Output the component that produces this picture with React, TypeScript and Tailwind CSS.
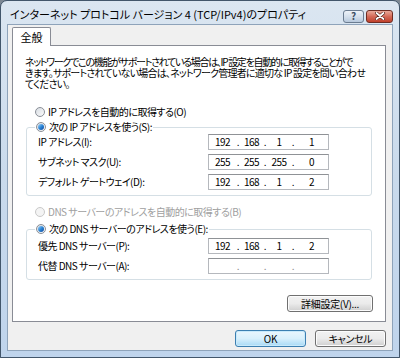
import type { ReactNode } from 'react';

const jp = "font-['Noto_Sans_CJK_JP','Noto_Sans',sans-serif] [font-feature-settings:'palt']";

function Radio({ checked, disabled }: { checked?: boolean; disabled?: boolean }) {
  return (
    <span
      className={`inline-flex items-center justify-center w-[10px] h-[10px] rounded-full border shrink-0 ${
        disabled
          ? 'border-[#c9c9c9] bg-[#f4f4f4]'
          : 'border-[#8a8f97] bg-gradient-to-br from-[#d8dde3] to-[#fbfbfb]'
      }`}
    >
      {checked && <span className="w-[6px] h-[6px] rounded-full bg-gradient-to-br from-[#9fd4f7] via-[#2b86d6] to-[#13459a]" />}
    </span>
  );
}

function IpBox({ parts }: { parts: string[] }) {
  const empty = parts.every(p => p === '');
  const dot = `text-center ${empty ? 'text-[#8a8a8a]' : ''}`;
  return (
    <div className="w-[121px] h-[16px] border border-[#b5b8bd] border-t-[#8f9296] bg-white grid grid-cols-[27px_4px_23px_4px_24px_4px_1fr] items-center text-[10px] leading-none text-black">
      <span className="text-center">{parts[0]}</span>
      <span className={dot}>.</span>
      <span className="text-center">{parts[1]}</span>
      <span className={dot}>.</span>
      <span className="text-center">{parts[2]}</span>
      <span className={dot}>.</span>
      <span className="text-center">{parts[3]}</span>
    </div>
  );
}

function Row({ label, parts }: { label: string; parts: string[] }) {
  return (
    <div className="flex items-center h-[16px]">
      <span className="w-[181px] pl-[11px] leading-none">{label}</span>
      <IpBox parts={parts} />
    </div>
  );
}

function Group({ legend, children, className }: { legend: ReactNode; children: ReactNode; className?: string }) {
  return (
    <fieldset className={`mx-[13px] border border-[#d5dfe5] rounded-[3px] ${className ?? ''}`}>
      <legend className="ml-[8px] px-[1px] h-[12px] flex items-center gap-[3px] leading-none">
        {legend}
      </legend>
      {children}
    </fieldset>
  );
}

function Btn({ children, primary, className }: { children: ReactNode; primary?: boolean; className?: string }) {
  return (
    <button
      type="button"
      className={`h-[17px] rounded-[3px] border text-[10px] leading-none text-black tracking-[-0.3px] ${
        primary
          ? 'border-[#3c7fb1] bg-gradient-to-b from-[#eaf6fd] via-[#d9f0fc] to-[#a7d9f5] shadow-[inset_0_0_0_1px_#c9eafb]'
          : 'border-[#707070] bg-gradient-to-b from-[#f2f2f2] via-[#ebebeb] to-[#cfcfcf] shadow-[inset_0_0_0_1px_#fcfcfc]'
      } ${className ?? ''}`}
    >
      {children}
    </button>
  );
}

export default function App() {
  return (
    <div className={`w-[400px] h-[358px] bg-[#7d8894] ${jp}`}>
      <div className="w-full h-full rounded-t-[7px] border border-[#42566b] bg-gradient-to-b from-[#dbe6f1] via-[#c9daec] to-[#bfd4ec] flex flex-col">
        {/* title bar */}
        <div className="h-[23px] flex items-center pl-[9px] pr-[6px] pt-[4px]">
          <span className="flex-1 text-[11px] leading-none text-black">
            インターネット プロトコル バージョン 4 (TCP/IPv4)のプロパティ
          </span>
          <div className="flex gap-[2px] mt-[3px]">
            <div className="w-[21px] h-[13px] rounded-[3px] border border-[#6b7c90] bg-gradient-to-b from-[#edf2f8] via-[#d5e0ec] to-[#b7c8dc] flex items-center justify-center text-[10px] font-bold leading-none text-[#3d4e63]">
              ?
            </div>
            <div className="w-[27px] h-[13px] rounded-[3px] border border-[#6e2c22] bg-gradient-to-b from-[#e9a99a] via-[#d46a58] to-[#c03f2a] flex items-center justify-center">
              <svg width="10" height="8" viewBox="0 0 10 8">
                <path d="M1.5 1 L8.5 7 M8.5 1 L1.5 7" stroke="#4a1a12" strokeWidth="3" strokeLinecap="round" />
                <path d="M1.5 1 L8.5 7 M8.5 1 L1.5 7" stroke="#fff" strokeWidth="1.8" strokeLinecap="round" />
              </svg>
            </div>
          </div>
        </div>

        {/* client */}
        <div className="flex-1 mx-[6px] mb-[6px] border border-[#8ea3ba] bg-[#f0f0f0] flex flex-col px-[4px] pt-[1px]">
          {/* tab strip */}
          <div className="h-[19px] flex items-end">
            <div className="relative z-10 -mb-px w-[39px] h-[19px] bg-white border border-b-0 border-[#898c95] rounded-t-[2px] flex items-center justify-center text-[11px] leading-none">
              全般
            </div>
          </div>

          {/* tab panel */}
          <div className="h-[277px] bg-white border border-[#898c95] mr-[2px] text-[10px] tracking-[-0.5px] text-black flex flex-col">
            <div className="pl-[12px] pt-[10px] leading-[11px] whitespace-nowrap flex flex-col">
              <span className="tracking-[-1.3px]">ネットワークでこの機能がサポートされている場合は、IP 設定を自動的に取得することがで</span>
              <span className="tracking-[-0.78px]">きます。サポートされていない場合は、ネットワーク管理者に適切な IP 設定を問い合わせ</span>
              <span className="tracking-[-0.78px]">てください。</span>
            </div>

            <div className="mt-[17px] ml-[22px] h-[12px] flex items-center gap-[3px] leading-none">
              <Radio />
              <span>IP アドレスを自動的に取得する(O)</span>
            </div>

            <Group
              className="mt-[3px] pb-[5px]"
              legend={
                <>
                  <Radio checked />
                  <span>次の IP アドレスを使う(S):</span>
                </>
              }
            >
              <div className="flex flex-col gap-[4px] pt-[1px]">
                <Row label="IP アドレス(I):" parts={['192', '168', '1', '1']} />
                <Row label="サブネット マスク(U):" parts={['255', '255', '255', '0']} />
                <Row label="デフォルト ゲートウェイ(D):" parts={['192', '168', '1', '2']} />
              </div>
            </Group>

            <div className="mt-[10px] ml-[22px] h-[12px] flex items-center gap-[3px] leading-none text-[#a0a0a0]">
              <Radio disabled />
              <span>DNS サーバーのアドレスを自動的に取得する(B)</span>
            </div>

            <Group
              className="mt-[5px] pb-[5px]"
              legend={
                <>
                  <Radio checked />
                  <span>次の DNS サーバーのアドレスを使う(E):</span>
                </>
              }
            >
              <div className="flex flex-col gap-[4px] pt-[3px]">
                <Row label="優先 DNS サーバー(P):" parts={['192', '168', '1', '2']} />
                <Row label="代替 DNS サーバー(A):" parts={['', '', '', '']} />
              </div>
            </Group>

            <div className="flex justify-end mr-[12px] mt-[15px]">
              <Btn className="w-[86px]">詳細設定(V)...</Btn>
            </div>
          </div>

          {/* dialog buttons */}
          <div className="flex justify-end gap-[9px] mt-[8px] mr-[2px]">
            <Btn primary className="w-[71px]">OK</Btn>
            <Btn className="w-[71px]">キャンセル</Btn>
          </div>
        </div>
      </div>
    </div>
  );
}
